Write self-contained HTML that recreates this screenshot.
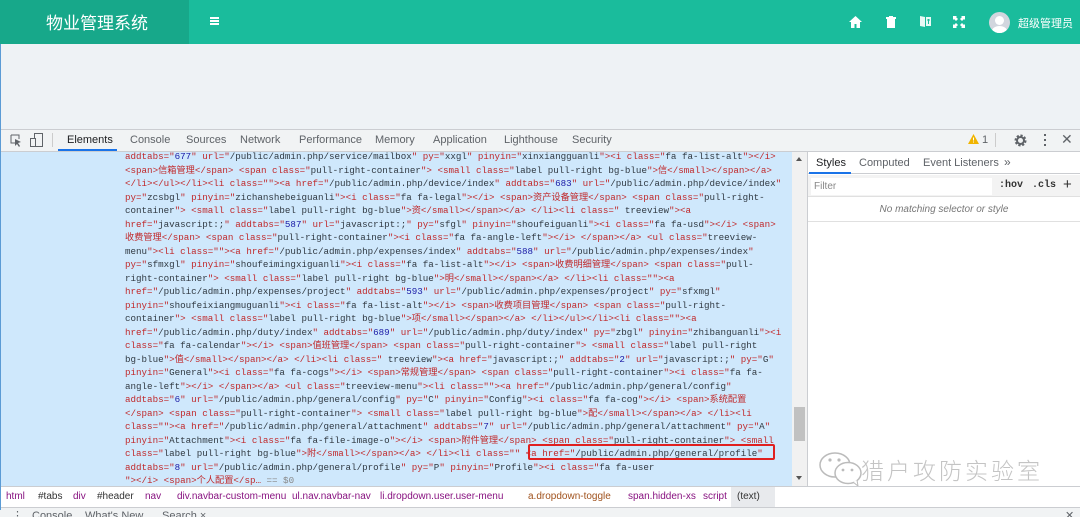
<!DOCTYPE html>
<html><head><meta charset="utf-8">
<style>
*{margin:0;padding:0;box-sizing:border-box}
body{width:1080px;height:517px;overflow:hidden;background:#eef2f5;font-family:"Liberation Sans","Noto Sans CJK SC",sans-serif;position:relative}
.abs{position:absolute}
#hdr{left:0;top:0;width:1080px;height:44px;background:#1abc9c}
#logo{left:0;top:0;width:189px;height:44px;background:#17a88a;color:#fff;font-size:17px;line-height:44px;padding-left:46px;font-family:"Noto Sans CJK SC",sans-serif}
.tb{top:129px;left:0;width:1080px;height:23px;background:#f1f3f4;border-top:1px solid #cbcdd1;border-bottom:1px solid #cbcdd1}
.tab{top:134px;font-size:11px;color:#5f6368}
#code{left:0;top:152px;width:792px;height:334px;background:#cfe8fc;border-left:1px solid #5b9bd5;overflow:hidden}
#code pre{position:absolute;left:124px;top:-2px;font-family:"Liberation Mono","Noto Sans CJK SC",monospace;font-size:9.2px;line-height:13.5px;color:#c0282a;white-space:pre}
.v{color:#303942}.n{color:#1a1aa6}.g{color:#888}
#sb{left:792px;top:152px;width:15px;height:334px;background:#f1f1f1}
#rp{left:807px;top:152px;width:273px;height:334px;background:#fff;border-left:1px solid #cbcdd1}
.bc{left:0;top:486px;width:1080px;height:21px;background:#fff;border-top:1px solid #cbcdd1;font-size:10px;line-height:20px}
.bc span{position:absolute;top:0}
.p{color:#881280}.d{color:#333}.o{color:#a0521d}
</style></head><body>
<div id="hdr" class="abs"></div>
<div id="logo" class="abs">物业管理系统</div>
<div class="abs" style="left:210px;top:17px;width:9px;height:2px;background:#fff;box-shadow:0 3px 0 #fff,0 6px 0 #fff"></div>
<svg class="abs" style="left:849px;top:16px" width="13" height="12" viewBox="0 0 13 12"><path d="M6.5 0L0 6h2v6h3.5V8h2v4H11V6h2z" fill="#fff"/></svg>
<svg class="abs" style="left:886px;top:16px" width="10" height="12" viewBox="0 0 10 12"><path d="M0 1h10v2H0zM3 0h4v1H3zM1 3h8v9H1z" fill="#fff"/></svg>
<svg class="abs" style="left:920px;top:15px" width="11" height="13" viewBox="0 0 11 13"><path d="M0 1l5 1v10l-5-1zM6 2h5v9H6z" fill="#fff" opacity=".9"/><path d="M7 5h3M8.5 4v5" stroke="#1abc9c"/></svg>
<svg class="abs" style="left:953px;top:16px" width="12" height="12" viewBox="0 0 12 12"><path d="M0 0h4L3 1l2 2-2 2-2-2-1 1zM12 0v4l-1-1-2 2-2-2 2-2-1-1zM0 12V8l1 1 2-2 2 2-2 2 1 1zM12 12H8l1-1-2-2 2-2 2 2 1-1z" fill="#fff"/></svg>
<div class="abs" style="left:989px;top:12px;width:21px;height:21px;border-radius:50%;background:#d2d6de;overflow:hidden"><div class="abs" style="left:6px;top:4px;width:9px;height:9px;border-radius:50%;background:#fff"></div><div class="abs" style="left:3px;top:14px;width:15px;height:10px;border-radius:50%;background:#fff"></div></div>
<div class="abs" style="left:1018px;top:15px;color:#fff;font-size:11px">超级管理员</div>

<div class="tb abs"></div>
<svg class="abs" style="left:10px;top:134px" width="12" height="13" viewBox="0 0 12 13"><path d="M1 1h8v4M1 1v8h4" stroke="#5f6368" fill="none"/><path d="M5 5l6 3-3 1 2 3-1 1-2-3-2 2z" fill="#5f6368"/></svg>
<svg class="abs" style="left:30px;top:133px" width="14" height="14" viewBox="0 0 14 14"><rect x="4.5" y=".5" width="8" height="13" fill="none" stroke="#5f6368"/><rect x=".5" y="5.5" width="5" height="8" fill="#f1f3f4" stroke="#5f6368"/></svg>
<div class="abs" style="left:52px;top:133px;width:1px;height:14px;background:#ccc"></div>
<div class="tab abs" style="left:67px;color:#202124">Elements</div>
<div class="abs" style="left:58px;top:149px;width:59px;height:2px;background:#1a73e8"></div>
<div class="tab abs" style="left:130px">Console</div>
<div class="tab abs" style="left:186px">Sources</div>
<div class="tab abs" style="left:240px">Network</div>
<div class="tab abs" style="left:299px">Performance</div>
<div class="tab abs" style="left:375px">Memory</div>
<div class="tab abs" style="left:433px">Application</div>
<div class="tab abs" style="left:504px">Lighthouse</div>
<div class="tab abs" style="left:572px">Security</div>
<svg class="abs" style="left:968px;top:134px" width="11" height="10" viewBox="0 0 11 10"><path d="M5.5 0L11 10H0z" fill="#f0b400"/><path d="M5.5 3.5v3M5.5 7.5v1" stroke="#fff"/></svg>
<div class="tab abs" style="left:982px">1</div>
<div class="abs" style="left:995px;top:133px;width:1px;height:14px;background:#ccc"></div>
<svg class="abs" style="left:1014px;top:134px" width="13" height="13" viewBox="0 0 13 13"><circle cx="6.5" cy="6.5" r="4.5" fill="none" stroke="#5f6368" stroke-width="3" stroke-dasharray="2 1.5"/><circle cx="6.5" cy="6.5" r="3.5" fill="none" stroke="#5f6368" stroke-width="2"/></svg>
<div class="abs" style="left:1044px;top:134px;width:2px;height:12px;background:repeating-linear-gradient(#5f6368 0 2px,transparent 2px 5px)"></div>
<div class="abs" style="left:1061px;top:131px;font-size:14px;color:#5f6368">✕</div>

<div id="code" class="abs"><pre id="pre">addtabs="677" url="/public/admin.php/service/mailbox" py="xxgl" pinyin="xinxiangguanli"&gt;&lt;i class="fa fa-list-alt"&gt;&lt;/i&gt;
&lt;span&gt;信箱管理&lt;/span&gt; &lt;span class="pull-right-container"&gt; &lt;small class="label pull-right bg-blue"&gt;信&lt;/small&gt;&lt;/span&gt;&lt;/a&gt;
&lt;/li&gt;&lt;/ul&gt;&lt;/li&gt;&lt;li class=""&gt;&lt;a href="/public/admin.php/device/index" addtabs="683" url="/public/admin.php/device/index"
py="zcsbgl" pinyin="zichanshebeiguanli"&gt;&lt;i class="fa fa-legal"&gt;&lt;/i&gt; &lt;span&gt;资产设备管理&lt;/span&gt; &lt;span class="pull-right-
container"&gt; &lt;small class="label pull-right bg-blue"&gt;资&lt;/small&gt;&lt;/span&gt;&lt;/a&gt; &lt;/li&gt;&lt;li class=" treeview"&gt;&lt;a
href="javascript:;" addtabs="587" url="javascript:;" py="sfgl" pinyin="shoufeiguanli"&gt;&lt;i class="fa fa-usd"&gt;&lt;/i&gt; &lt;span&gt;
收费管理&lt;/span&gt; &lt;span class="pull-right-container"&gt;&lt;i class="fa fa-angle-left"&gt;&lt;/i&gt; &lt;/span&gt;&lt;/a&gt; &lt;ul class="treeview-
menu"&gt;&lt;li class=""&gt;&lt;a href="/public/admin.php/expenses/index" addtabs="588" url="/public/admin.php/expenses/index"
py="sfmxgl" pinyin="shoufeimingxiguanli"&gt;&lt;i class="fa fa-list-alt"&gt;&lt;/i&gt; &lt;span&gt;收费明细管理&lt;/span&gt; &lt;span class="pull-
right-container"&gt; &lt;small class="label pull-right bg-blue"&gt;明&lt;/small&gt;&lt;/span&gt;&lt;/a&gt; &lt;/li&gt;&lt;li class=""&gt;&lt;a
href="/public/admin.php/expenses/project" addtabs="593" url="/public/admin.php/expenses/project" py="sfxmgl"
pinyin="shoufeixiangmuguanli"&gt;&lt;i class="fa fa-list-alt"&gt;&lt;/i&gt; &lt;span&gt;收费项目管理&lt;/span&gt; &lt;span class="pull-right-
container"&gt; &lt;small class="label pull-right bg-blue"&gt;项&lt;/small&gt;&lt;/span&gt;&lt;/a&gt; &lt;/li&gt;&lt;/ul&gt;&lt;/li&gt;&lt;li class=""&gt;&lt;a
href="/public/admin.php/duty/index" addtabs="689" url="/public/admin.php/duty/index" py="zbgl" pinyin="zhibanguanli"&gt;&lt;i
class="fa fa-calendar"&gt;&lt;/i&gt; &lt;span&gt;值班管理&lt;/span&gt; &lt;span class="pull-right-container"&gt; &lt;small class="label pull-right
bg-blue"&gt;值&lt;/small&gt;&lt;/span&gt;&lt;/a&gt; &lt;/li&gt;&lt;li class=" treeview"&gt;&lt;a href="javascript:;" addtabs="2" url="javascript:;" py="G"
pinyin="General"&gt;&lt;i class="fa fa-cogs"&gt;&lt;/i&gt; &lt;span&gt;常规管理&lt;/span&gt; &lt;span class="pull-right-container"&gt;&lt;i class="fa fa-
angle-left"&gt;&lt;/i&gt; &lt;/span&gt;&lt;/a&gt; &lt;ul class="treeview-menu"&gt;&lt;li class=""&gt;&lt;a href="/public/admin.php/general/config"
addtabs="6" url="/public/admin.php/general/config" py="C" pinyin="Config"&gt;&lt;i class="fa fa-cog"&gt;&lt;/i&gt; &lt;span&gt;系统配置
&lt;/span&gt; &lt;span class="pull-right-container"&gt; &lt;small class="label pull-right bg-blue"&gt;配&lt;/small&gt;&lt;/span&gt;&lt;/a&gt; &lt;/li&gt;&lt;li
class=""&gt;&lt;a href="/public/admin.php/general/attachment" addtabs="7" url="/public/admin.php/general/attachment" py="A"
pinyin="Attachment"&gt;&lt;i class="fa fa-file-image-o"&gt;&lt;/i&gt; &lt;span&gt;附件管理&lt;/span&gt; &lt;span class="pull-right-container"&gt; &lt;small
class="label pull-right bg-blue"&gt;附&lt;/small&gt;&lt;/span&gt;&lt;/a&gt; &lt;/li&gt;&lt;li class="" &lt;a href="/public/admin.php/general/profile"
addtabs="8" url="/public/admin.php/general/profile" py="P" pinyin="Profile"&gt;&lt;i class="fa fa-user
"&gt;&lt;/i&gt; &lt;span&gt;个人配置&lt;/sp… == $0</pre>
<div class="abs" style="left:527px;top:292px;width:247px;height:16px;border:2px solid #e02020;border-radius:2px"></div>
</div>
<div id="sb" class="abs">
<div class="abs" style="left:4px;top:5px;width:0;height:0;border:3px solid transparent;border-bottom:4px solid #555;border-top:0"></div>
<div class="abs" style="left:2px;top:255px;width:11px;height:34px;background:#c1c1c1"></div>
<div class="abs" style="left:4px;top:324px;width:0;height:0;border:3px solid transparent;border-top:4px solid #555;border-bottom:0"></div>
</div>
<div id="rp" class="abs">
<div class="abs" style="left:0;top:0;width:272px;height:22px;border-bottom:1px solid #cbcdd1"></div>
<div class="abs" style="left:8px;top:5px;font-size:11px;color:#202124">Styles</div>
<div class="abs" style="left:1px;top:20px;width:42px;height:2px;background:#1a73e8"></div>
<div class="abs" style="left:51px;top:5px;font-size:11px;color:#5f6368">Computed</div>
<div class="abs" style="left:115px;top:5px;font-size:11px;color:#5f6368">Event Listeners</div>
<div class="abs" style="left:196px;top:3px;font-size:12px;color:#5f6368">»</div>
<div class="abs" style="left:0;top:23px;width:272px;height:22px;background:#f3f3f3;border-bottom:1px solid #e0e0e0"></div>
<div class="abs" style="left:3px;top:26px;width:181px;height:17px;background:#fff"></div>
<div class="abs" style="left:6px;top:29px;font-size:10px;color:#888">Filter</div>
<div class="abs" style="left:191px;top:28px;font-size:10px;color:#333;font-family:'Liberation Mono',monospace;font-weight:bold">:hov</div>
<div class="abs" style="left:224px;top:28px;font-size:10px;color:#333;font-family:'Liberation Mono',monospace;font-weight:bold">.cls</div>
<div class="abs" style="left:255px;top:24px;font-size:15px;color:#333">+</div>
<div class="abs" style="left:0;top:52px;width:272px;text-align:center;font-size:10px;font-style:italic;color:#777">No matching selector or style</div>
<div class="abs" style="left:0;top:69px;width:272px;height:1px;background:#e0e0e0"></div>
<svg class="abs" style="left:10px;top:298px" width="48" height="38" viewBox="0 0 48 38"><ellipse cx="17" cy="15" rx="15" ry="12" fill="#fff" stroke="#bbb" stroke-width="1.5"/><ellipse cx="30" cy="23" rx="13" ry="10.5" fill="#fff" stroke="#bbb" stroke-width="1.5"/><circle cx="12" cy="10" r="1.6" fill="#bbb"/><circle cx="21" cy="10" r="1.6" fill="#bbb"/><circle cx="25" cy="20" r="1.4" fill="#bbb"/><circle cx="34" cy="20" r="1.4" fill="#bbb"/><path d="M35 32l5 4-1-6" fill="#fff" stroke="#bbb"/></svg>
<div class="abs" style="left:53px;top:300px;font-size:23px;color:#c4c4c4;letter-spacing:3px;font-family:'Noto Sans CJK SC',sans-serif;font-weight:300">猎户攻防实验室</div>
</div>
<div class="bc abs">
<span class="p" style="left:6px">html</span><span class="d" style="left:38px">#tabs</span><span class="p" style="left:73px">div</span><span class="d" style="left:97px">#header</span><span class="p" style="left:145px">nav</span><span class="p" style="left:177px">div.navbar-custom-menu</span><span class="p" style="left:292px">ul.nav.navbar-nav</span><span class="p" style="left:380px">li.dropdown.user.user-menu</span><span class="o" style="left:528px">a.dropdown-toggle</span><span class="p" style="left:628px">span.hidden-xs</span><span class="p" style="left:703px">script</span><span class="d" style="left:731px;width:44px;height:20px;background:#e8eaed;padding-left:6px">(text)</span>
</div>
<div class="abs" style="left:0;top:507px;width:1080px;height:10px;background:#f1f3f4;border-top:1px solid #cbcdd1;overflow:hidden">
<div class="abs" style="left:12px;top:1px;font-size:11px;color:#5f6368">⋮</div>
<div class="abs" style="left:32px;top:2px;font-size:11px;color:#5f6368">Console</div>
<div class="abs" style="left:85px;top:2px;font-size:11px;color:#5f6368">What's New</div>
<div class="abs" style="left:162px;top:2px;font-size:11px;color:#5f6368">Search ×</div>
<div class="abs" style="left:1065px;top:1px;font-size:11px;color:#5f6368">✕</div>
</div>
<div class="abs" style="left:0;top:44px;width:1px;height:466px;background:#5b9bd5"></div>
<script>
var p=document.getElementById('pre');var t=p.textContent;var out='',inq=false,buf='';
function esc(s){return s.replace(/&/g,'&amp;').replace(/</g,'&lt;').replace(/>/g,'&gt;')}
for(var i=0;i<t.length;i++){var c=t[i];
 if(c=='"'){ if(!inq){out+=esc(buf)+'"';buf='';inq=true;} else {out+='<span class="'+(/^\d+$/.test(buf)?'n':'v')+'">'+esc(buf).replace(/\n/g,'</span>\n<span class="v">')+'</span>"';buf='';inq=false;} }
 else buf+=c;}
out+=esc(buf);
out=out.replace('== $0','<span class="g">== $0</span>');
p.innerHTML=out;
</script>
</body></html>
